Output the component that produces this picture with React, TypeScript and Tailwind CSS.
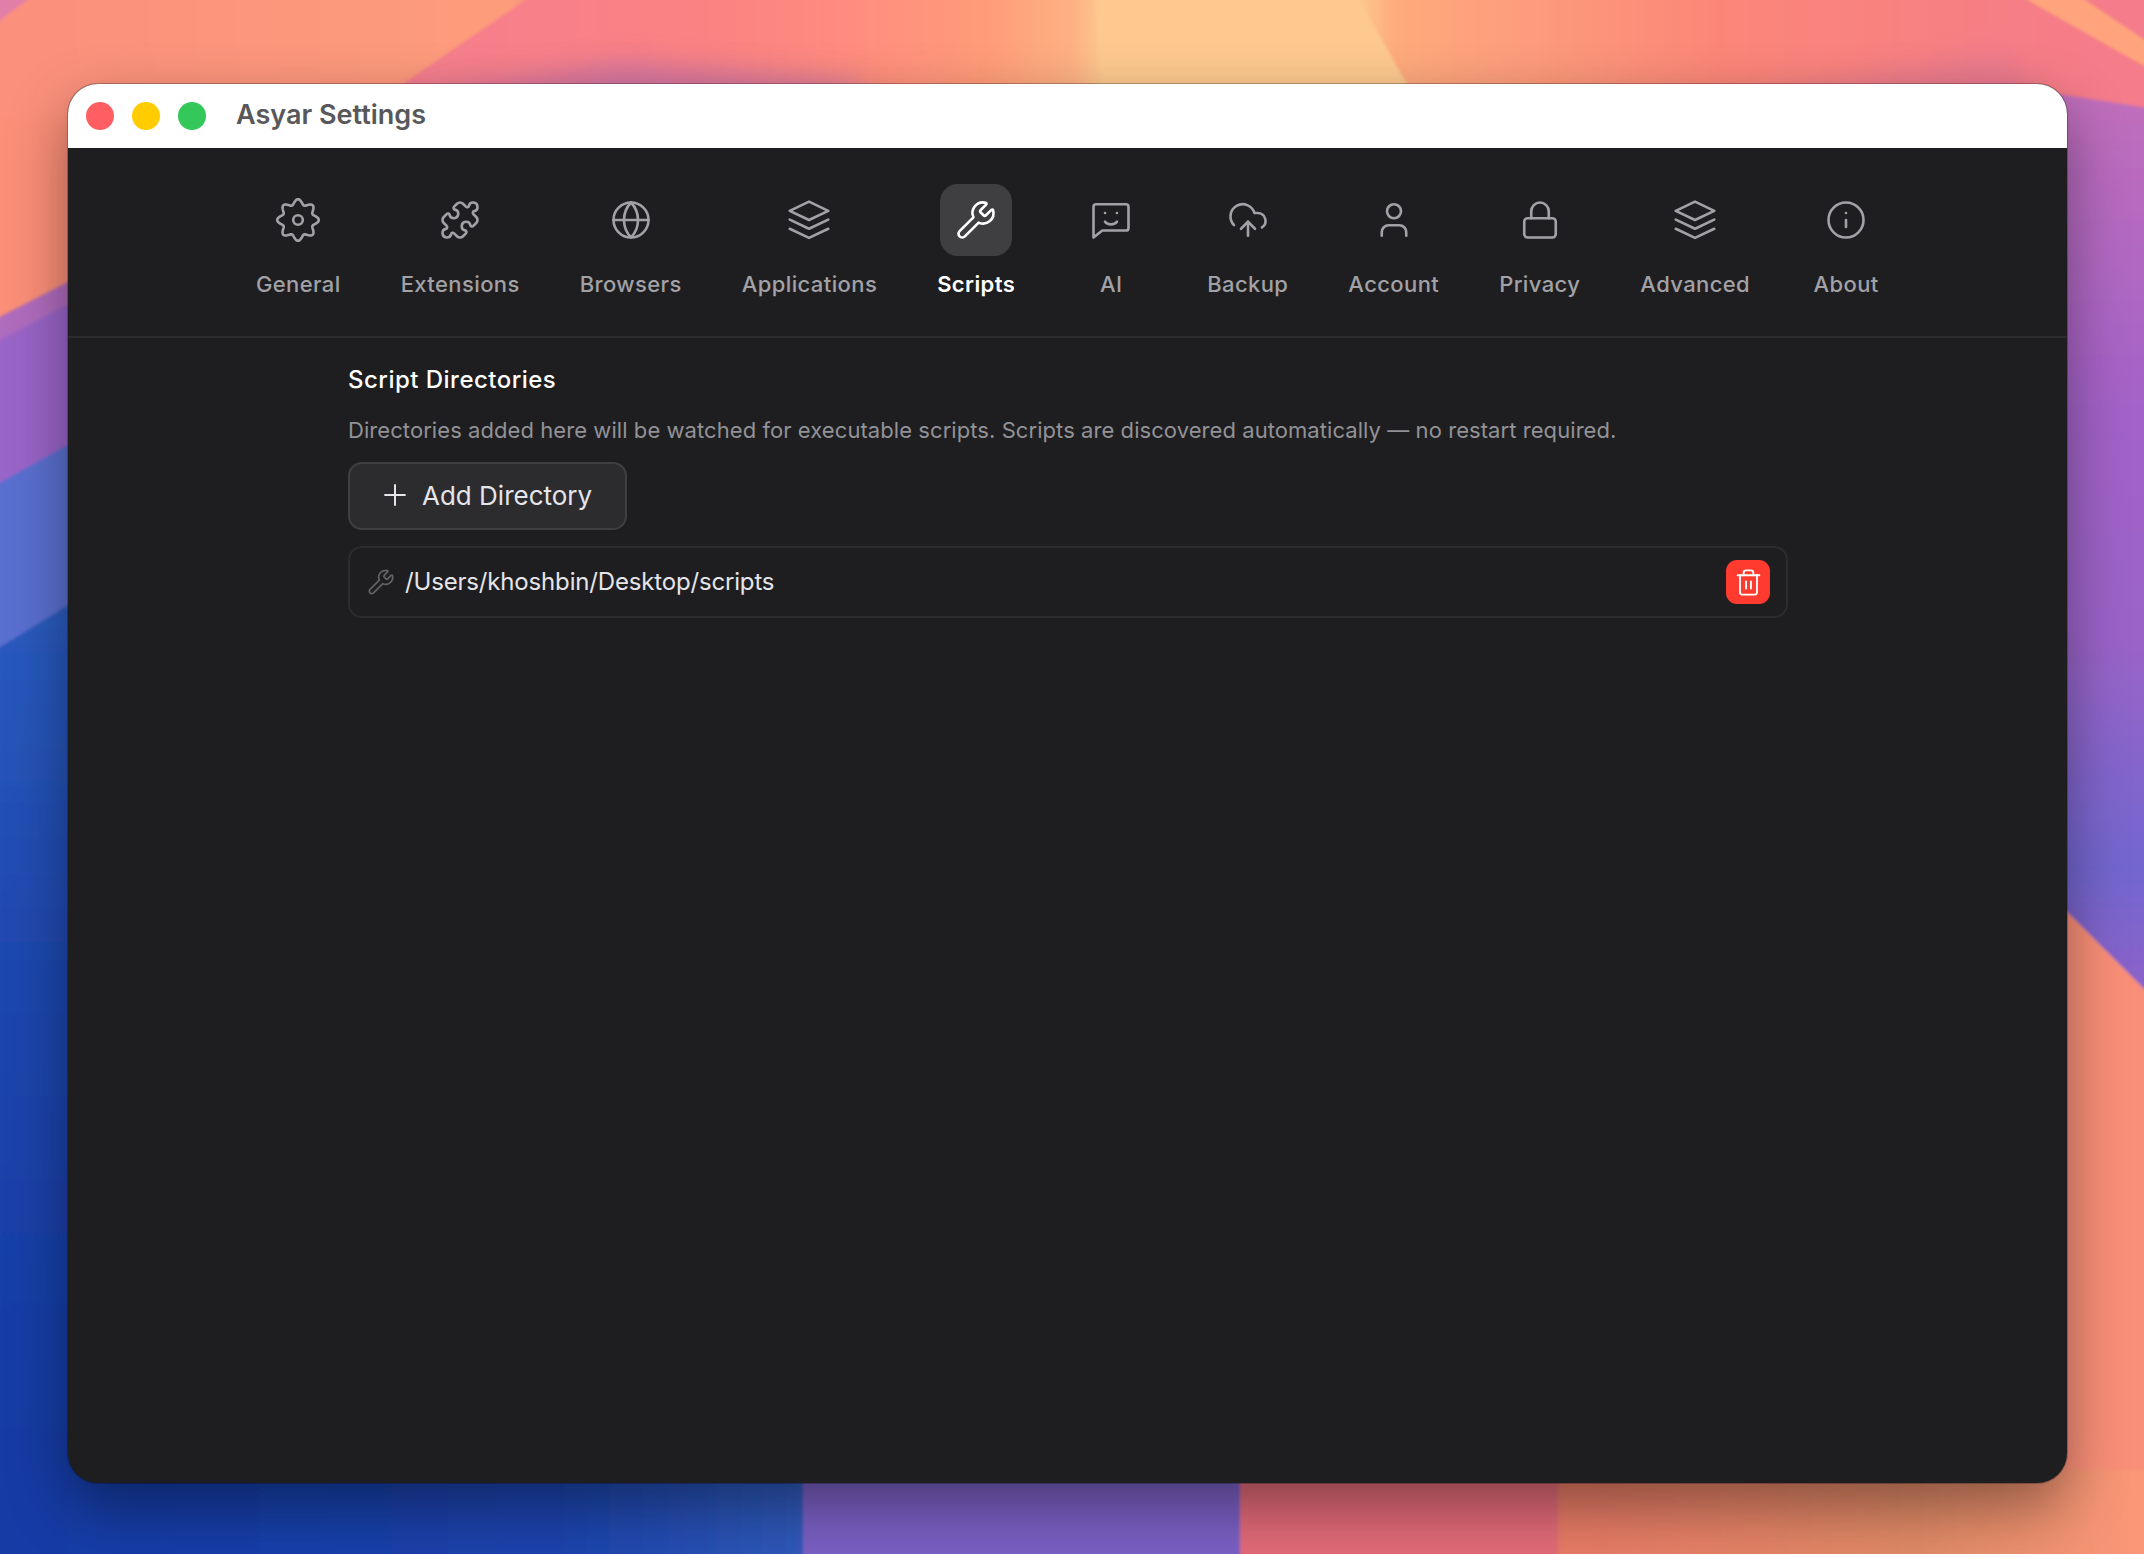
import { CloudUpload, Globe, Info, Lock, Plus, Puzzle, Trash2, User, Wrench } from 'lucide-react'
import type { ComponentType } from 'react'

type IconProps = { size?: number; strokeWidth?: number }

const SmileChat = ({ size = 24, strokeWidth = 1.5 }: IconProps) => (
  <svg width={size} height={size} viewBox="0 0 24 24" fill="none" stroke="currentColor" strokeWidth={strokeWidth} strokeLinecap="round" strokeLinejoin="round">
    <path d="M3.5 3h17a1.5 1.5 0 0 1 1.5 1.5v12a1.5 1.5 0 0 1-1.5 1.5H7l-5 4V4.5A1.5 1.5 0 0 1 3.5 3z" />
    <path d="M8.6 8h.01M15.4 8h.01" />
    <path d="M8.6 13c1.5 2 5.3 2 6.8 0" />
  </svg>
)

const Stack = ({ size = 24, strokeWidth = 1.5 }: IconProps) => (
  <svg width={size} height={size} viewBox="0 0 24 24" fill="none" stroke="currentColor" strokeWidth={strokeWidth} strokeLinecap="round" strokeLinejoin="round">
    <path d="M12 1.5 23 6.8 12 12 1 6.8z" />
    <path d="M1 11.8 12 17l11-5.2" />
    <path d="M1 17l11 5.2L23 17" />
  </svg>
)

// eight rounded teeth, sampled around the circle
const gearPath = Array.from({ length: 144 }, (_, i) => {
  const a = (i / 144) * Math.PI * 2
  const r = 9.1 + 1.3 * Math.cos(8 * a)
  const x = 12 + r * Math.sin(a)
  const y = 12 - r * Math.cos(a)
  return `${i === 0 ? 'M' : 'L'}${x.toFixed(2)} ${y.toFixed(2)}`
}).join(' ') + 'z'

const Gear = ({ strokeWidth = 1.5 }: IconProps) => (
  <svg width={48} height={48} viewBox="0 0 24 24" fill="none" stroke="currentColor" strokeWidth={strokeWidth * 0.875} strokeLinejoin="round">
    <path d={gearPath} />
    <circle cx="12" cy="12" r="2.4" />
  </svg>
)

type NavItem = { label: string; icon: ComponentType<any>; active?: boolean }

const items: NavItem[] = [
  { label: 'General', icon: Gear },
  { label: 'Extensions', icon: Puzzle },
  { label: 'Browsers', icon: Globe },
  { label: 'Applications', icon: Stack },
  { label: 'Scripts', icon: Wrench, active: true },
  { label: 'AI', icon: SmileChat },
  { label: 'Backup', icon: CloudUpload },
  { label: 'Account', icon: User },
  { label: 'Privacy', icon: Lock },
  { label: 'Advanced', icon: Stack },
  { label: 'About', icon: Info },
]

const Wallpaper = () => (
  <svg className="absolute inset-0" width="2144" height="1554" viewBox="0 0 2144 1554">
    <defs>
      <linearGradient id="top" x1="0" x2="1" y1="0" y2="0">
        <stop offset="0" stopColor="#fb8f7c" />
        <stop offset="0.24" stopColor="#fd9c7a" />
        <stop offset="0.27" stopColor="#f98287" />
        <stop offset="0.36" stopColor="#ff8084" />
        <stop offset="0.46" stopColor="#ff9c78" />
        <stop offset="0.5" stopColor="#fdb183" />
        <stop offset="0.515" stopColor="#fdc98f" />
        <stop offset="0.63" stopColor="#fdcb90" />
        <stop offset="0.65" stopColor="#feaa7c" />
        <stop offset="0.8" stopColor="#fb8678" />
        <stop offset="1" stopColor="#f47a8c" />
      </linearGradient>
      <linearGradient id="streak" x1="0" x2="1" y1="0" y2="0">
        <stop offset="0" stopColor="#f47d90" />
        <stop offset="0.55" stopColor="#fb8282" />
        <stop offset="1" stopColor="#ff9c78" stopOpacity="0" />
      </linearGradient>
      <linearGradient id="left" x1="0" x2="0" y1="0" y2="1">
        <stop offset="0" stopColor="#2a5cc0" />
        <stop offset="0.4" stopColor="#1e46ae" />
        <stop offset="1" stopColor="#1338a2" />
      </linearGradient>
      <linearGradient id="rightPurple" x1="0" x2="0" y1="0" y2="1">
        <stop offset="0" stopColor="#c06ebb" />
        <stop offset="0.35" stopColor="#a362c8" />
        <stop offset="0.6" stopColor="#9a64c8" />
        <stop offset="0.85" stopColor="#7266cf" />
        <stop offset="1" stopColor="#8f63c8" />
      </linearGradient>
      <linearGradient id="bottomBlue" x1="0" x2="1" y1="0" y2="0">
        <stop offset="0" stopColor="#153aa5" />
        <stop offset="0.7" stopColor="#1b43ac" />
        <stop offset="1" stopColor="#3059b9" />
      </linearGradient>
      <linearGradient id="bottomOrange" x1="0" x2="1" y1="0" y2="0">
        <stop offset="0" stopColor="#e87a66" />
        <stop offset="0.6" stopColor="#e08a66" />
        <stop offset="1" stopColor="#fc9878" />
      </linearGradient>
      <filter id="soft" x="-5%" y="-5%" width="110%" height="110%">
        <feGaussianBlur stdDeviation="1.5" />
      </filter>
      <filter id="haze" x="-30%" y="-80%" width="160%" height="260%">
        <feGaussianBlur stdDeviation="14" />
      </filter>
    </defs>
    <rect width="2144" height="1554" fill="#fb8f78" />
    <g filter="url(#soft)">
      <rect x="-10" y="-10" width="2164" height="130" fill="url(#top)" />
      <polygon points="540,-10 1000,-10 1000,120 350,120" fill="url(#streak)" />
      <polygon points="1094,-10 1354,-10 1427,120 1104,120" fill="#fdc98f" />
      <polygon points="2010,-10 2070,-10 2160,50 2160,75" fill="#ffa47c" />
      <polygon points="-10,-10 40,-10 -10,28" fill="#e27fa8" />

      <polygon points="-10,322 80,276 80,450 -10,490" fill="#9a65c8" />
      <polygon points="-10,322 80,276 80,298 -10,345" fill="#b06cbe" />
      <polygon points="-10,488 80,438 80,600 -10,655" fill="#5a6fd0" />
      <polygon points="-10,653 80,598 80,1560 -10,1560" fill="url(#left)" />

      <polygon points="2060,94 2160,110 2160,1005 2060,905" fill="url(#rightPurple)" />
      <polygon points="2060,905 2160,1005 2160,1560 2060,1560" fill="#f98f78" />

      <rect x="-10" y="1470" width="815" height="94" fill="url(#bottomBlue)" />
      <rect x="803" y="1470" width="438" height="94" fill="#7a60c4" />
      <rect x="1240" y="1470" width="320" height="94" fill="#e26a78" />
      <rect x="1558" y="1470" width="600" height="94" fill="url(#bottomOrange)" />
    </g>
    <polygon points="420,100 620,62 860,84 860,130 420,130" fill="#c56fa8" opacity="0.75" filter="url(#haze)" />
    <polygon points="1700,110 2000,50 2060,120" fill="#d9739a" opacity="0.45" filter="url(#haze)" />
  </svg>
)

export default function App() {
  return (
    <div className="relative w-[2144px] h-[1554px] overflow-hidden pl-[68px] pt-[84px] font-['Inter',sans-serif]">
      <Wallpaper />
      <div className="relative w-[1999px] h-[1399px] rounded-[30px] overflow-hidden bg-[#1e1e20] shadow-[0_0_0_1px_rgba(0,0,0,0.25),0_24px_60px_rgba(0,0,0,0.4)]">
        <div className="flex items-center h-[64px] bg-white pl-[18px]">
          <div className="flex gap-[18px]">
            <span className="w-[28px] h-[28px] rounded-full bg-[#ff5f63]" />
            <span className="w-[28px] h-[28px] rounded-full bg-[#ffcc00]" />
            <span className="w-[28px] h-[28px] rounded-full bg-[#34c759]" />
          </div>
          <h1 className="ml-[30px] mb-[2px] text-[27px] font-semibold text-[#58585a]">Asyar Settings</h1>
        </div>

        <nav className="flex justify-center gap-[60px] h-[190px] pt-[36px] pl-[3px] border-b-2 border-[#2c2c2e]">
          {items.map(({ label, icon: Icon, active }) => (
            <div key={label} className="flex flex-col items-center min-w-[72px]">
              <div className={`flex items-center justify-center w-[72px] h-[72px] rounded-[18px] ${active ? 'bg-[#3f3f42] text-white' : 'text-[#a1a1a6]'}`}>
                <Icon size={42} strokeWidth={1.5} />
              </div>
              <span className={`mt-[13px] text-[22px] leading-[30px] tracking-[0.018em] ${active ? 'text-white font-semibold' : 'text-[#a1a1a6] font-medium'}`}>{label}</span>
            </div>
          ))}
        </nav>

        <section className="pl-[280px] pr-[279px] pt-[26px]">
          <h2 className="text-[24px] leading-[32px] font-medium text-white tracking-[0.02em]">Script Directories</h2>
          <p className="mt-[18px] text-[22px] leading-[32px] text-[#929297] tracking-[0.003em]">
            Directories added here will be watched for executable scripts. Scripts are discovered automatically — no restart required.
          </p>
          <button className="flex items-center gap-[10px] mt-[16px] h-[68px] w-[279px] pl-[28px] pb-[2px] rounded-[14px] bg-[#2c2c2e] border-2 border-[#3f3f42] text-[#e5e5ea] text-[26px]">
            <Plus size={34} strokeWidth={1.4} />
            Add Directory
          </button>
          <div className="flex items-center justify-between h-[72px] mt-[16px] pl-[17px] pr-[16px] rounded-[14px] border-2 border-[#2c2c2e]">
            <div className="flex items-center gap-[10px]">
              <Wrench size={28} strokeWidth={1.5} className="text-[#636366]" />
              <span className="text-[24px] tracking-[-0.007em] text-[#e5e5ea]">/Users/khoshbin/Desktop/scripts</span>
            </div>
            <button className="flex items-center justify-center w-[44px] h-[44px] rounded-[11px] bg-[#ff3b30] text-white">
              <Trash2 size={29} strokeWidth={1.5} />
            </button>
          </div>
        </section>
      </div>
    </div>
  )
}
